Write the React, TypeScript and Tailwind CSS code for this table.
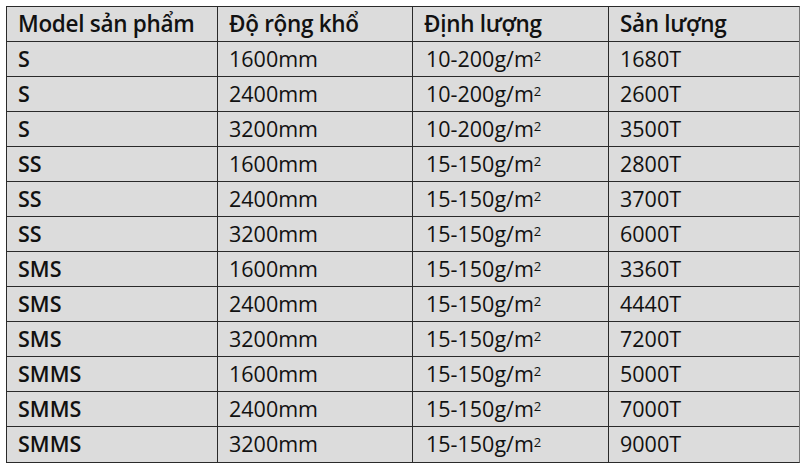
const rows: [string, string, string, string][] = [
  ["S", "1600mm", "10-200", "1680T"],
  ["S", "2400mm", "10-200", "2600T"],
  ["S", "3200mm", "10-200", "3500T"],
  ["SS", "1600mm", "15-150", "2800T"],
  ["SS", "2400mm", "15-150", "3700T"],
  ["SS", "3200mm", "15-150", "6000T"],
  ["SMS", "1600mm", "15-150", "3360T"],
  ["SMS", "2400mm", "15-150", "4440T"],
  ["SMS", "3200mm", "15-150", "7200T"],
  ["SMMS", "1600mm", "15-150", "5000T"],
  ["SMMS", "2400mm", "15-150", "7000T"],
  ["SMMS", "3200mm", "15-150", "9000T"],
];

const headers = ["Model sản phẩm", "Độ rộng khổ", "Định lượng", "Sản lượng"];
const cols = "grid-cols-[211px_195px_196px_192px]";

export default function App() {
  return (
    <div className="w-[806px] h-[468px] bg-white pt-[6px] pl-[6px] font-['Open_Sans',sans-serif] text-[#111]">
      <div className="w-[794px] border-[1.5px] border-[#2a2a2a] border-r-[#777] bg-[#dcdcdc]">
        <div className={`grid ${cols} h-[35px] border-b-[1.5px] border-[#2a2a2a]`}>
          {headers.map((h, i) => (
            <div
              key={h}
              className={`flex items-center pl-[11px] text-[22.5px] font-semibold tracking-[-0.3px] ${i < 3 ? "border-r-[1.5px] border-[#2a2a2a]" : ""}`}
            >
              {h}
            </div>
          ))}
        </div>
        {rows.map((r, idx) => (
          <div
            key={idx}
            className={`grid ${cols} h-[35px] ${idx < rows.length - 1 ? "border-b-[1.5px] border-[#2a2a2a]" : ""}`}
          >
            <div className="flex items-center pl-[11px] text-[21.5px] font-semibold border-r-[1.5px] border-[#2a2a2a]">
              {r[0]}
            </div>
            <div className="flex items-center pl-[11px] text-[21.5px] border-r-[1.5px] border-[#2a2a2a]">
              {r[1]}
            </div>
            <div className="flex items-center pl-[13px] text-[21.5px] border-r-[1.5px] border-[#2a2a2a]">
              {r[2]}g/m<sup className="text-[13px] relative -top-[3px]">2</sup>
            </div>
            <div className="flex items-center pl-[11px] text-[21.5px]">{r[3]}</div>
          </div>
        ))}
      </div>
    </div>
  );
}
